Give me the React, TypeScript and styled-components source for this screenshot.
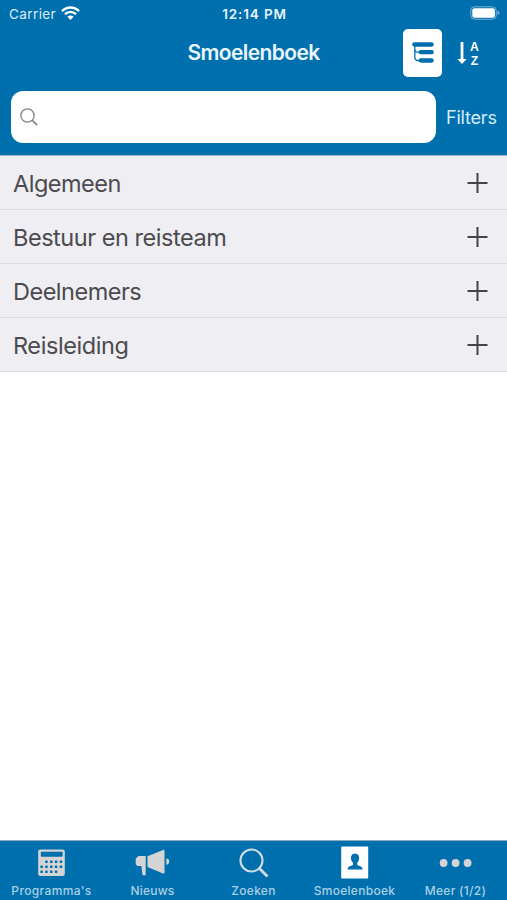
import React from "react";
import styled, { createGlobalStyle } from "styled-components";

const BLUE = "#006fae";

const GlobalStyle = createGlobalStyle`
  * { box-sizing: border-box; }
  body { margin: 0; background: #fff; }
  button { border: 0; padding: 0; background: none; font: inherit; color: inherit; }
`;

const Screen = styled.div`
  width: 507px;
  height: 900px;
  display: flex;
  flex-direction: column;
  overflow: hidden;
  background: #fff;
  font-family: Inter, "Liberation Sans", sans-serif;
`;

const Header = styled.header`
  height: 156px;
  flex: none;
  background: ${BLUE};
  border-bottom: 1px solid #a9b8c6;
  color: #fff;
`;

const StatusBar = styled.div`
  height: 27px;
  padding: 1px 7px 0 9px;
  display: grid;
  grid-template-columns: 1fr auto 1fr;
  align-items: center;
  font-size: 13.5px;
  line-height: 26px;
`;

const Carrier = styled.div`
  display: flex;
  align-items: center;
  gap: 5px;
  color: #d9edf8;
  letter-spacing: 0.4px;

  svg {
    margin-bottom: 2px;
  }
`;

const Clock = styled.div`
  font-size: 13.5px;
  font-weight: 600;
  letter-spacing: 0.85px;
  color: #e6f4fc;
`;

const BatterySlot = styled.div`
  display: flex;
  justify-content: flex-end;
  padding-bottom: 2px;
`;

const NavBar = styled.div`
  height: 52px;
  display: grid;
  grid-template-columns: 1fr auto 1fr;
  align-items: center;
`;

const Title = styled.h1`
  margin: 0;
  font-size: 21px;
  line-height: 26px;
  font-weight: 600;
  letter-spacing: -0.6px;
  color: #e9f6fd;
`;

const NavActions = styled.div`
  display: flex;
  justify-content: flex-end;
  gap: 12px;
  padding-right: 25px;
`;

const NavButton = styled.button<{ $active?: boolean; $width: number }>`
  width: ${(p) => p.$width}px;
  height: 48px;
  border-radius: 5px;
  display: flex;
  align-items: center;
  justify-content: center;
  background: ${(p) => (p.$active ? "#fff" : "transparent")};
`;

const SearchRow = styled.div`
  display: flex;
  align-items: center;
  gap: 10px;
  padding: 12px 10px 0 11px;
`;

const SearchField = styled.div`
  flex: none;
  width: 425px;
  height: 52px;
  padding-left: 9px;
  display: flex;
  align-items: center;
  border-radius: 12px;
  background: #fff;
`;

const FilterButton = styled.button`
  padding-top: 2px;
  font-size: 18px;
  line-height: 24px;
  letter-spacing: -0.2px;
  color: #d5eefb;
`;

const List = styled.ul`
  flex: 1;
  margin: 0;
  padding: 0;
  list-style: none;
`;

const Row = styled.li`
  height: 53.9px;
  padding: 1.4px 18px 0 13px;
  display: flex;
  align-items: center;
  justify-content: space-between;
  background: #efeef3;
  border-bottom: 1px solid #dcdce0;
`;

const RowLabel = styled.span<{ $tracking: number }>`
  padding-top: 2px;
  font-size: 23.5px;
  line-height: 30px;
  letter-spacing: ${(p) => p.$tracking}px;
  color: #4b4b4f;
`;

const TabBar = styled.nav`
  height: 60.5px;
  flex: none;
  display: grid;
  grid-template-columns: repeat(5, 101px);
  justify-content: center;
  background: ${BLUE};
  border-top: 1px solid #8eacc0;
  color: #a9cfe5;
`;

const Tab = styled.button`
  display: flex;
  flex-direction: column;
  align-items: center;
  padding-top: 3px;
`;

const TabIcon = styled.span`
  height: 38px;
  display: flex;
  align-items: center;
`;

const TabLabel = styled.span<{ $tracking: number }>`
  padding-top: 1px;
  font-size: 12px;
  line-height: 16px;
  font-weight: 500;
  white-space: nowrap;
  letter-spacing: ${(p) => p.$tracking}px;
`;

const WifiIcon = () => (
  <svg width="19" height="14" viewBox="0 0 19 14" fill="none" stroke="#fff" strokeWidth="2.5">
    <path d="M1 5.1C6 .2 13 .2 18 5.1" />
    <path d="M4 8.2c3.3-3.1 7.7-3.1 11 0" />
    <path d="M6.4 10.8Q9.5 8 12.6 10.8L9.5 13.9Z" fill="#fff" stroke="none" />
  </svg>
);

const BatteryIcon = () => (
  <svg width="30" height="14" viewBox="0 0 30 14">
    <rect x=".8" y=".8" width="25.4" height="12.4" rx="3.5" fill="none" stroke="#78b2d4" />
    <rect x="2.3" y="2.3" width="22.6" height="9.4" rx="2" fill="#fff" />
    <path d="M27.5 4.8q2 .6 2 2.2t-2 2.2z" fill="#78b2d4" />
  </svg>
);

const TreeIcon = () => (
  <svg width="24" height="24" viewBox="0 0 24 24" fill="none" stroke={BLUE}>
    <path d="M3.8 3v13q0 3.5 3.3 3.5H9M3.8 8q0 3.2 3.3 3.2H9" strokeWidth="1.3" />
    <path d="M3.3 3.5H20.7M9.8 11.2h10.9M9.8 19.5h10.9" strokeWidth="4.3" strokeLinecap="round" />
  </svg>
);

const AzMark = styled.span`
  display: grid;
  grid-template-rows: 14px 14px;
  margin: 2px 0 0 3px;
  font: 700 12.2px/14px "Liberation Sans", sans-serif;
  color: #fff;
  text-align: center;
`;

const SortIcon = () => (
  <>
    <svg width="10" height="25" viewBox="0 0 10 25">
      <path d="M5 1v19" stroke="#fff" strokeWidth="2.8" />
      <path d="M.4 18h9.2L5 23z" fill="#fff" />
    </svg>
    <AzMark>
      <span>A</span>
      <span>Z</span>
    </AzMark>
  </>
);

const SearchIcon = ({ size, color, weight }: { size: number; color: string; weight: number }) => (
  <svg width={size} height={size} viewBox="0 0 30 30" fill="none" stroke={color} strokeWidth={weight}>
    <circle cx="12.5" cy="12.5" r="11" />
    <path d="m20.5 20.5 8 8" strokeWidth={weight * 1.35} />
  </svg>
);

const PlusIcon = () => (
  <svg width="23" height="22" viewBox="0 0 23 22" stroke="#444347" strokeWidth="2">
    <path d="M1.5 11h20M11.5 1v20" />
  </svg>
);

const keys = [
  [45.8, 863], [50.6, 863], [55.4, 863], [60.3, 863],
  [41, 868], [45.8, 868], [50.6, 868], [55.4, 868], [60.3, 868],
  [41, 872.9], [45.8, 872.9], [50.6, 872.9], [55.4, 872.9],
];

const CalculatorIcon = () => (
  <svg width="27" height="28" viewBox="37.5 849.5 27 28">
    <rect x="37.7" y="850" width="26.6" height="26.4" rx="2" fill="#d4d4d5" />
    <rect x="40.3" y="852.2" width="21.8" height="5" rx=".8" fill={BLUE} />
    {keys.map(([x, y]) => (
      <rect key={`${x}-${y}`} x={x - 1.1} y={y - 1.9} width="2.5" height="2.5" rx=".6" fill={BLUE} />
    ))}
  </svg>
);

const MegaphoneIcon = () => (
  <svg width="36" height="28" viewBox="0 0 36 28" fill="#d4d4d5">
    <path d="M.7 9.4 3.5 7h7.2v19.2H7.5L6.4 17H2.5L.7 15.5z" />
    <path d="m12.5 7.2 15.5-6.3q1.5-.2 1.5 1v21.8q0 1.2-1.5.8L12.5 18z" />
    <path d="M31.3 9.5q2.9 0 2.9 3.1t-2.9 3.1z" />
  </svg>
);

const ContactIcon = () => (
  <svg width="28" height="33" viewBox="0 0 28 33">
    <rect x=".2" y=".5" width="27" height="32" rx="1" fill="#fff" />
    <path
      d="M14 7.8c3.2 0 4.4 2.1 4.1 5-.2 2.2-1 3.1-1.9 4v2c1.1 1.5 5.4.8 5.4 4.7H6.6c0-3.9 4.3-3.2 5.4-4.7v-2c-.9-.9-1.8-1.8-2-4-.3-2.9.9-5 4-5z"
      fill={BLUE}
    />
  </svg>
);

const MoreIcon = () => (
  <svg width="34" height="10" viewBox="0 0 34 10" fill="#d4d4d5">
    <circle cx="4.6" cy="5" r="3.9" />
    <circle cx="16.6" cy="5" r="3.9" />
    <circle cx="28.6" cy="5" r="3.9" />
  </svg>
);

const groups = [
  { label: "Algemeen", tracking: -0.5 },
  { label: "Bestuur en reisteam", tracking: -0.46 },
  { label: "Deelnemers", tracking: -0.5 },
  { label: "Reisleiding", tracking: -0.42 },
];

const tabs = [
  { label: "Programma's", tracking: 0.35, icon: <CalculatorIcon /> },
  { label: "Nieuws", tracking: 0.2, icon: <MegaphoneIcon /> },
  { label: "Zoeken", tracking: 0.3, icon: <SearchIcon size={30} color="#d0dde5" weight={2.1} /> },
  { label: "Smoelenboek", tracking: 0.3, icon: <ContactIcon /> },
  { label: "Meer (1/2)", tracking: 0.3, icon: <MoreIcon /> },
];

export default function App() {
  return (
    <Screen>
      <GlobalStyle />
      <Header>
        <StatusBar>
          <Carrier>Carrier <WifiIcon /></Carrier>
          <Clock>12:14 PM</Clock>
          <BatterySlot><BatteryIcon /></BatterySlot>
        </StatusBar>
        <NavBar>
          <span />
          <Title>Smoelenboek</Title>
          <NavActions>
            <NavButton $active $width={39} aria-label="Groepen"><TreeIcon /></NavButton>
            <NavButton $width={28} aria-label="Sorteren"><SortIcon /></NavButton>
          </NavActions>
        </NavBar>
        <SearchRow>
          <SearchField><SearchIcon size={18} color="#858585" weight={2.2} /></SearchField>
          <FilterButton>Filters</FilterButton>
        </SearchRow>
      </Header>
      <List>
        {groups.map((g) => (
          <Row key={g.label}>
            <RowLabel $tracking={g.tracking}>{g.label}</RowLabel>
            <PlusIcon />
          </Row>
        ))}
      </List>
      <TabBar>
        {tabs.map((t) => (
          <Tab key={t.label}>
            <TabIcon>{t.icon}</TabIcon>
            <TabLabel $tracking={t.tracking}>{t.label}</TabLabel>
          </Tab>
        ))}
      </TabBar>
    </Screen>
  );
}
